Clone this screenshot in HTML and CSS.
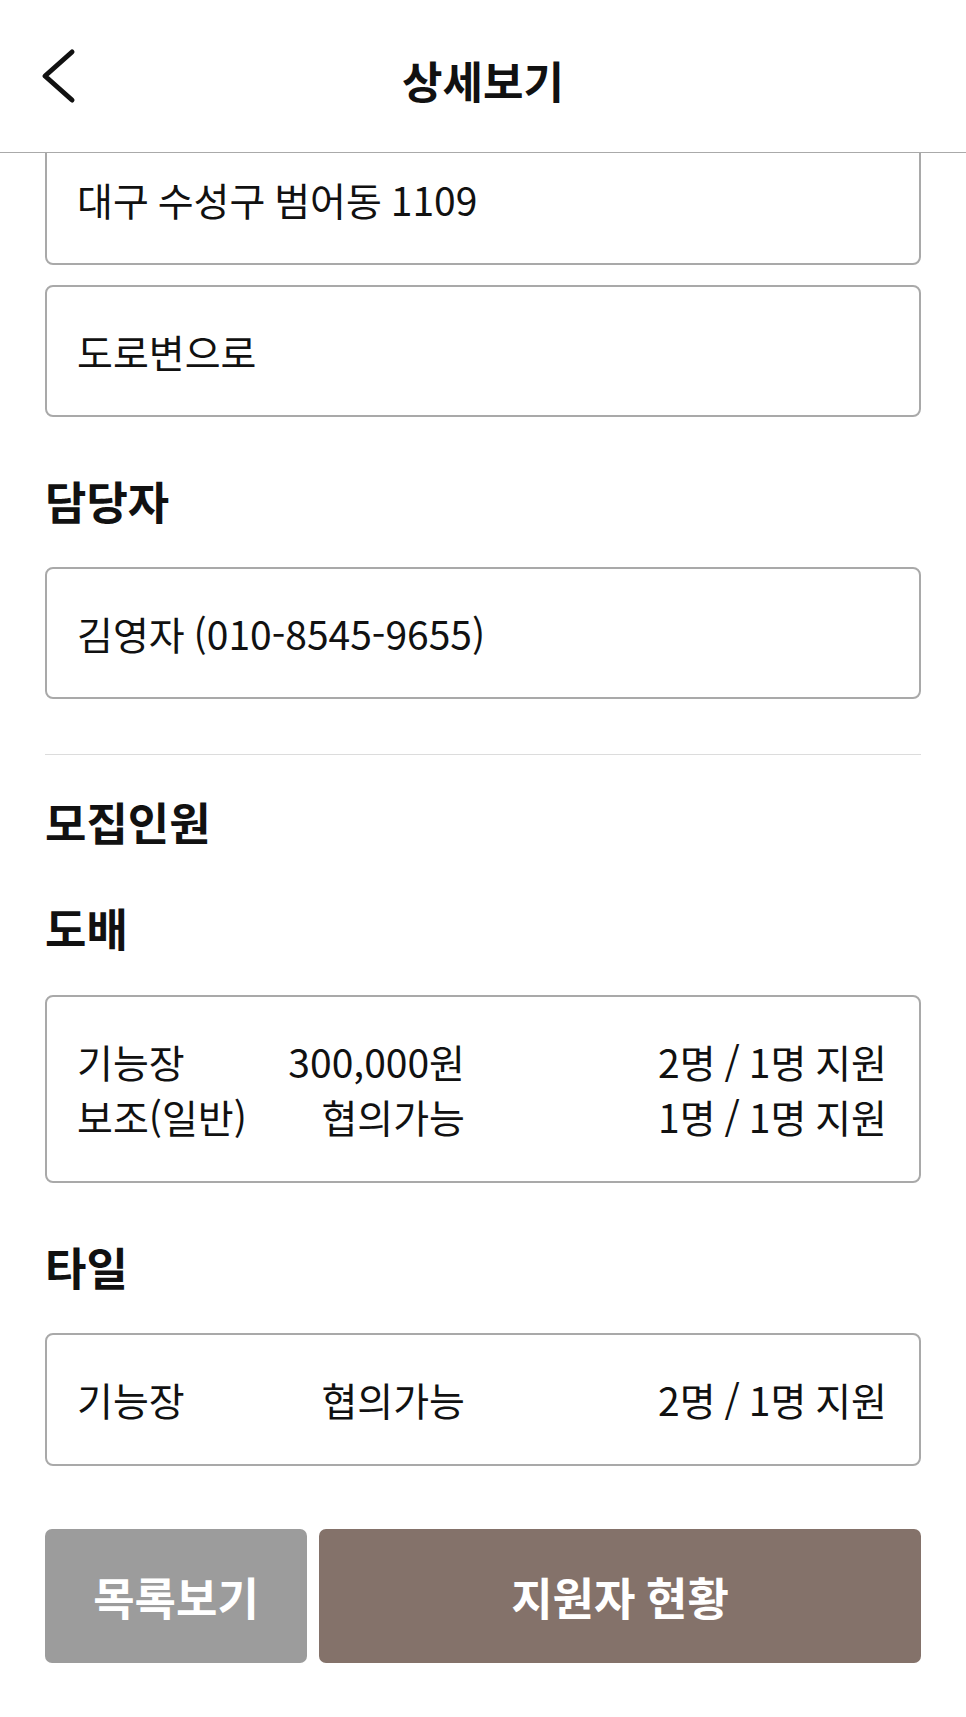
FILE: index.html
```html
<!DOCTYPE html>
<html lang="ko">
<head>
<meta charset="utf-8">
<title>상세보기</title>
<link rel="stylesheet" href="styles.css">
</head>
<body>
<div class="app">
  <header class="topbar">
    <div class="topbar-left">
      <svg class="back" width="40" height="60" viewBox="0 0 40 60" aria-hidden="true">
        <path d="M34 6 L7 30 L34 54" fill="none" stroke="#111" stroke-width="5" stroke-linecap="round" stroke-linejoin="round"/>
      </svg>
    </div>
    <h1 class="title">상세보기</h1>
    <div class="topbar-right"></div>
  </header>
  <main class="content">
    <div class="field field-first">대구 수성구 범어동 1109</div>
    <div class="field field-gap">도로변으로</div>

    <h2 class="heading heading-after-box">담당자</h2>
    <div class="field">김영자 (010-8545-9655)</div>

    <hr class="divider">

    <h2 class="heading heading-section">모집인원</h2>

    <h2 class="heading heading-sub">도배</h2>
    <div class="field field-rows">
      <div class="row"><span class="c1">기능장</span><span class="c2">300,000원</span><span class="c3">2명 / 1명 지원</span></div>
      <div class="row"><span class="c1">보조(일반)</span><span class="c2">협의가능</span><span class="c3">1명 / 1명 지원</span></div>
    </div>

    <h2 class="heading heading-after-box">타일</h2>
    <div class="field field-rows">
      <div class="row"><span class="c1">기능장</span><span class="c2">협의가능</span><span class="c3">2명 / 1명 지원</span></div>
    </div>

    <div class="actions">
      <button class="btn btn-list">목록보기</button>
      <button class="btn btn-applicants">지원자 현황</button>
    </div>
  </main>
</div>
</body>
</html>
```

FILE: styles.css
```css
* { box-sizing: border-box; }
html, body {
  margin: 0;
  padding: 0;
  background: #fff;
}
body {
  font-family: "Noto Sans CJK KR", "Noto Sans", sans-serif;
  color: #111;
  height: 1717px;
  overflow: hidden;
}
.app {
  display: flex;
  flex-direction: column;
  height: 1717px;
}
.topbar {
  flex: none;
  height: 153px;
  border-bottom: 1.5px solid #aaaaaa;
  display: grid;
  grid-template-columns: 1fr auto 1fr;
  align-items: center;
  background: #fff;
}
.topbar-left {
  padding-left: 38px;
  display: flex;
  align-items: center;
}
.back { display: block; }
.title {
  margin: 8px 0 0 0;
  font-size: 44px;
  font-weight: 700;
  line-height: 1.2;
}
.content {
  flex: 1;
  overflow: hidden;
  padding: 0 45px;
}
.field {
  border: 2px solid #a9a9a9;
  border-radius: 8px;
  padding: 37px 32px 37px 30px;
  font-size: 39px;
  line-height: 54px;
  word-spacing: -2px;
  height: 132px;
  display: flex;
  align-items: center;
}
.field-first { margin-top: -20px; }
.field-gap { margin-top: 20px; }
.field-rows {
  height: auto;
  display: block;
}
.row {
  display: grid;
  grid-template-columns: 190px 198px 1fr;
  line-height: 55px;
}
.c2, .c3 { text-align: right; }
.heading {
  margin: 0;
  font-size: 45px;
  font-weight: 700;
  line-height: 61px;
}
.heading-after-box { margin-top: 53px; margin-bottom: 36px; }
.heading-section { margin-top: 36px; }
.heading-sub { margin-top: 45px; margin-bottom: 37px; }
.divider {
  border: none;
  border-top: 1.5px solid #dcdcdc;
  margin: 55px 0 0 0;
  height: 0;
}
.actions {
  margin-top: 63px;
  display: flex;
  gap: 12px;
}
.btn {
  height: 134px;
  border: none;
  border-radius: 7px;
  color: #fff;
  font-family: "Noto Sans CJK KR", "Noto Sans", sans-serif;
  font-size: 45px;
  font-weight: 700;
  word-spacing: -2px;
  padding: 0;
}
.btn-list {
  width: 262px;
  flex: none;
  background: #9c9c9c;
}
.btn-applicants {
  flex: 1;
  background: #84726a;
}
```
